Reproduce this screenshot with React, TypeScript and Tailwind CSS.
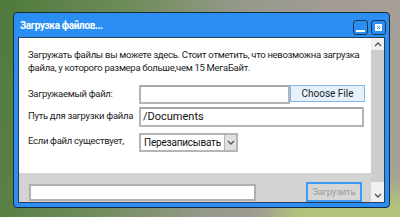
import React from 'react';

const font = { fontFamily: 'Roboto, "Noto Sans", sans-serif' };

const TitleButton = ({ kind }: { kind: 'min' | 'close' }) => (
  <div className="w-[15px] h-[15px] rounded-[3px] border border-[#1d3552] bg-[#2b8ef3] flex items-center justify-center">
    {kind === 'min' ? (
      <div className="w-[9px] h-[2px] bg-white mt-[6px]" />
    ) : (
      <svg width="7" height="7" viewBox="0 0 7 7">
        <rect x="0" y="0" width="7" height="7" fill="#fff" />
        <path d="M2 2 L5 5 M5 2 L2 5" stroke="#2b8ef3" strokeWidth="1" />
      </svg>
    )}
  </div>
);

const Chevron = ({ up }: { up?: boolean }) => (
  <svg width="8" height="6" viewBox="0 0 8 6">
    <path d={up ? 'M1 5 L4 2 L7 5' : 'M1 1 L4 4 L7 1'} fill="none" stroke="#555" strokeWidth="1.4" />
  </svg>
);

export default function App() {
  return (
    <div
      className="w-[400px] h-[217px] overflow-hidden pt-[12px] pl-[13px] bg-[linear-gradient(100deg,#4f7a3c_0%,#6f8c5a_30%,#95998a_55%,#a59c98_80%,#a6a096_100%)]"
      style={font}
    >
      <div className="relative w-[377px] h-[196px]">
        <div className="absolute left-[260px] top-[180px] w-[200px] h-[60px] rounded-full bg-[#b3c679] blur-[14px]" />
        <div className="relative w-[377px] h-[196px] rounded-[4px] border border-[#1a2a3a] bg-[#2b8ef3] flex flex-col">
          <div className="h-[24px] flex items-center justify-between pl-[6px] pr-[3px]">
            <span className="text-white font-bold text-[10px] tracking-[-0.35px] pt-[1px] whitespace-nowrap">Загрузка файлов...</span>
            <div className="flex gap-[3px] pt-[5px]">
              <TitleButton kind="min" />
              <TitleButton kind="close" />
            </div>
          </div>
          <div className="mx-[4px] mb-[4px] flex-1 flex border border-[#2a3f55] bg-white overflow-hidden">
            <div className="w-[355px] min-w-0 flex flex-col">
              <div className="h-[139px] bg-white pl-[9px] pt-[10px] text-[#222] text-[9.5px] tracking-[-0.3px] whitespace-nowrap">
                <p className="leading-[13px]">
                  Загружать файлы вы можете здесь. Стоит отметить, что невозможна загрузка
                  <br />
                  файла, у которого размера больше,чем 15 МегаБайт.
                </p>
                <div className="mt-[11px] flex items-center">
                  <span className="w-[111px]">Загружаемый файл:</span>
                  <div className="flex items-start">
                    <div className="w-[151px] h-[19px] border-2 border-[#b5b5b5] border-t-[#a6a6a6] bg-white" />
                    <div className="w-[75px] h-[17px] border border-[#7fb6ec] bg-[#e5f1fb] flex items-center justify-center text-[#222] text-[10px] tracking-normal">
                      Choose File
                    </div>
                  </div>
                </div>
                <div className="mt-[3px] flex items-center">
                  <span className="w-[111px] -mt-[2px]">Путь для загрузки файла</span>
                  <div className="w-[225px] h-[20px] border-2 border-[#b5b5b5] border-t-[#a6a6a6] bg-white flex items-center pl-[2px] text-[11px] tracking-normal text-[#111]">
                    /Documents
                  </div>
                </div>
                <div className="mt-[6px] flex items-center">
                  <span className="w-[111px] -mt-[3px]">Если файл существует,</span>
                  <div className="w-[99px] h-[19px] border-2 border-[#b5b5b5] bg-white flex items-stretch">
                    <div className="flex-1 flex items-center pl-[3px] text-[10px] tracking-[-0.2px] text-[#111]">Перезаписывать</div>
                    <div className="w-[12px] bg-[#e0e0e0] border-l border-[#b5b5b5] flex items-center justify-center">
                      <Chevron />
                    </div>
                  </div>
                </div>
              </div>
              <div className="flex-1 bg-[#d3d3d3] flex items-start justify-between pl-[10px] pr-[9px] pt-[9px]">
                <div className="w-[227px] h-[17px] mt-[2px] border-2 border-[#b0b0b0] bg-white" />
                <div className="w-[56px] h-[20px] border-2 border-[#3d9bf5] bg-[#d6d6d6] flex items-center justify-center text-[9.5px] tracking-[-0.2px] text-[#9b9b9b] whitespace-nowrap">
                  Загрузить
                </div>
              </div>
            </div>
            <div className="w-[13px] bg-[#f0f0f0] flex flex-col items-center">
              <div className="h-[12px] flex items-center justify-center">
                <Chevron up />
              </div>
              <div className="w-[13px] h-[132px] bg-[#cdcdcd]" />
              <div className="flex-1 flex items-end justify-center pb-[3px]">
                <Chevron />
              </div>
            </div>
          </div>
        </div>
      </div>
    </div>
  );
}
